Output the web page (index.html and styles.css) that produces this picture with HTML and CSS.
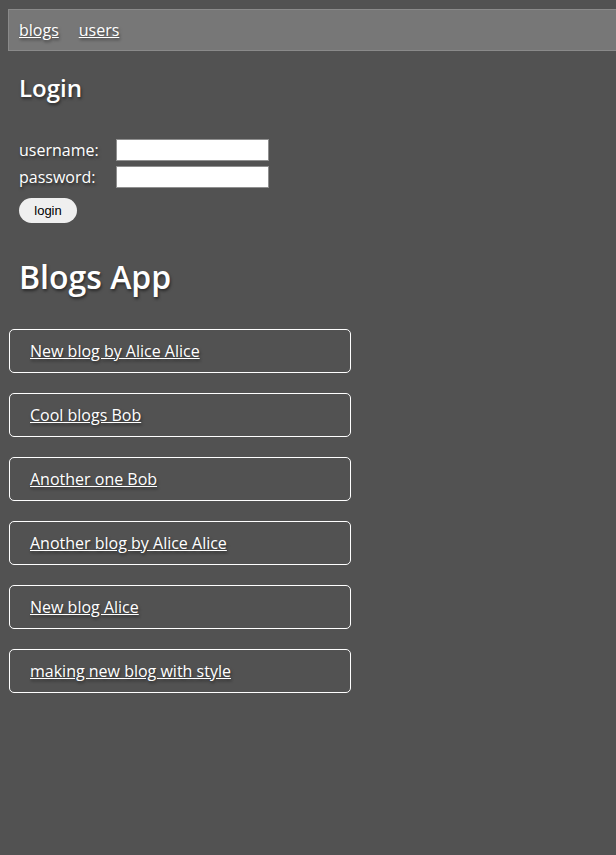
FILE: index.html
```html
<!DOCTYPE html>
<html>
<head>
<meta charset="utf-8">
<link rel="stylesheet" href="styles.css">
</head>
<body>
<div class="nav">
  <a href="#" class="nav-link">blogs</a>
  <a href="#" class="nav-link">users</a>
</div>
<div class="content">
  <h2 class="login-title">Login</h2>
  <form class="login-form">
    <div class="row"><label class="lbl">username:</label><input class="field" type="text"></div>
    <div class="row"><label class="lbl">password:</label><input class="field" type="password"></div>
    <button class="btn" type="button">login</button>
  </form>
  <h1 class="app-title">Blogs App</h1>
</div>
<div class="blogs">
  <div class="blog"><a href="#">New blog by Alice Alice</a></div>
  <div class="blog"><a href="#">Cool blogs Bob</a></div>
  <div class="blog"><a href="#">Another one Bob</a></div>
  <div class="blog"><a href="#">Another blog by Alice Alice</a></div>
  <div class="blog"><a href="#">New blog Alice</a></div>
  <div class="blog"><a href="#">making new blog with style</a></div>
</div>
</body>
</html>
```
FILE: styles.css
```css
html, body { background: #525252; }
body {
  margin: 8px;
  margin-right: 0;
  color: #fff;
  font-family: "Open Sans", sans-serif;
  font-size: 16px;
  text-shadow: 1px 2px 3px rgba(0,0,0,0.5);
  overflow: hidden;
}
a { color: #fff; }
.nav {
  margin-top: 1px;
  background: #777;
  border: 1px solid #8a8a8a;
  border-right: none;
  padding: 9px 10px;
  line-height: 22px;
  display: flex;
  gap: 20px;
}
.content { padding-left: 11px; }
.login-title {
  font-size: 24px;
  font-weight: 600;
  line-height: 33px;
  margin: 20px 0 0;
}
.login-form { margin-top: 32px; }
.row {
  display: flex;
  align-items: center;
  height: 27px;
}
.lbl { width: 97px; }
.field {
  width: 153px;
  height: 22px;
  box-sizing: border-box;
  margin: 0;
  border: 1px solid #8f8f8f;
  background: #fff;
  padding: 1px 2px;
}
.btn {
  margin-top: 8px;
  width: 58px;
  height: 25px;
  border: none;
  border-radius: 13px;
  background: #efefef;
  color: #000;
  font-family: "Liberation Sans", Arial, sans-serif;
  font-size: 13px;
  text-shadow: none;
  padding: 0;
}
.app-title {
  font-size: 32px;
  font-weight: 600;
  line-height: 44px;
  margin: 32px 0 0;
}
.blogs { margin-top: 30px; }
.blog {
  margin-left: 1px;
  height: 42px;
  border: 1px solid #fff;
  border-radius: 5px;
  padding-left: 20px;
  box-sizing: content-box;
  width: 320px;
  display: flex;
  align-items: center;
  margin-bottom: 20px;
}
```
